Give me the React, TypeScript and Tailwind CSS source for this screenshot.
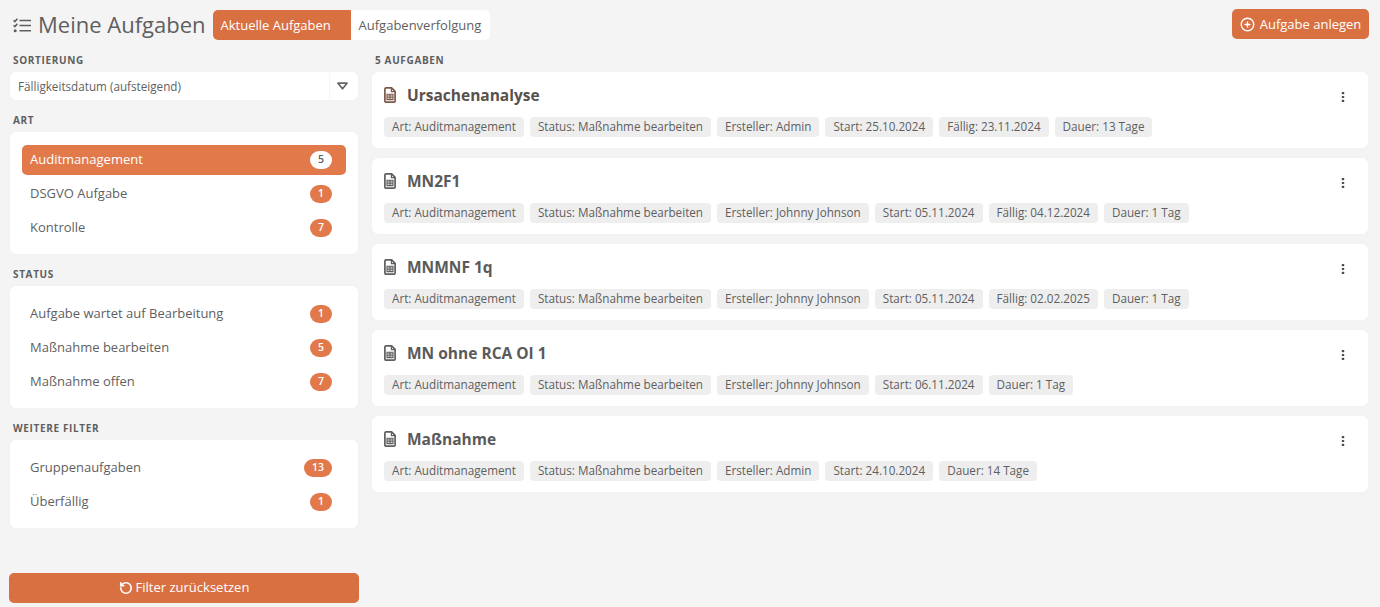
import { CirclePlus, RotateCcw } from "lucide-react";

const ACCENT = "bg-[#d97042]";

type Task = { title: string; tags: string[]; accent?: boolean };

const tasks: Task[] = [
  {
    title: "Ursachenanalyse",
    accent: true,
    tags: ["Art: Auditmanagement", "Status: Maßnahme bearbeiten", "Ersteller: Admin", "Start: 25.10.2024", "Fällig: 23.11.2024", "Dauer: 13 Tage"],
  },
  {
    title: "MN2F1",
    tags: ["Art: Auditmanagement", "Status: Maßnahme bearbeiten", "Ersteller: Johnny Johnson", "Start: 05.11.2024", "Fällig: 04.12.2024", "Dauer: 1 Tag"],
  },
  {
    title: "MNMNF 1q",
    tags: ["Art: Auditmanagement", "Status: Maßnahme bearbeiten", "Ersteller: Johnny Johnson", "Start: 05.11.2024", "Fällig: 02.02.2025", "Dauer: 1 Tag"],
  },
  {
    title: "MN ohne RCA OI 1",
    tags: ["Art: Auditmanagement", "Status: Maßnahme bearbeiten", "Ersteller: Johnny Johnson", "Start: 06.11.2024", "Dauer: 1 Tag"],
  },
  {
    title: "Maßnahme",
    tags: ["Art: Auditmanagement", "Status: Maßnahme bearbeiten", "Ersteller: Admin", "Start: 24.10.2024", "Dauer: 14 Tage"],
  },
];

const filterGroups = [
  {
    label: "Art",
    items: [
      { name: "Auditmanagement", count: 5, active: true },
      { name: "DSGVO Aufgabe", count: 1 },
      { name: "Kontrolle", count: 7 },
    ],
  },
  {
    label: "Status",
    items: [
      { name: "Aufgabe wartet auf Bearbeitung", count: 1 },
      { name: "Maßnahme bearbeiten", count: 5 },
      { name: "Maßnahme offen", count: 7 },
    ],
  },
  {
    label: "Weitere Filter",
    items: [
      { name: "Gruppenaufgaben", count: 13 },
      { name: "Überfällig", count: 1 },
    ],
  },
];

function TasksIcon() {
  return (
    <svg width="18" height="15" viewBox="0 0 18 15" fill="none" stroke="#5f5f5f" strokeWidth="1.6">
      <path d="M0.6 2.2 L1.9 3.5 L4.4 0.7" />
      <path d="M0.6 7.2 L1.9 8.5 L4.4 5.7" />
      <circle cx="2.2" cy="12.8" r="1.5" fill="#5f5f5f" stroke="none" />
      <path d="M6.5 2.5 H18 M6.5 7.5 H18 M6.5 12.8 H18" />
    </svg>
  );
}

function FileIcon({ color }: { color: string }) {
  return (
    <svg width="12" height="16" viewBox="0 0 12 16" fill="none" stroke={color} className="-mt-0.5 shrink-0">
      <path d="M1.8 0.9 H7.6 L11.1 4.4 V14 a1.1 1.1 0 0 1 -1.1 1.1 H2 A1.1 1.1 0 0 1 0.9 14 V2 A1.1 1.1 0 0 1 1.8 0.9 Z" strokeWidth="1.7" />
      <path d="M7.4 1 V4.6 H11" strokeWidth="1.2" />
      <path d="M3 7.2 H9 V12.6 H3 Z M3 9 H9 M3 10.8 H9 M6 7.2 V12.6" strokeWidth="1.1" />
    </svg>
  );
}

function DotsIcon() {
  return (
    <svg width="4" height="12" viewBox="0 0 4 12" fill="#4a4a4a" className="mt-0.5">
      <rect x="0.7" y="1" width="2.6" height="2.2" rx="0.8" />
      <rect x="0.7" y="4.9" width="2.6" height="2.2" rx="0.8" />
      <rect x="0.7" y="8.8" width="2.6" height="2.2" rx="0.8" />
    </svg>
  );
}

function SectionLabel({ children }: { children: string }) {
  return (
    <div className="text-[10px] leading-[14px] font-bold uppercase tracking-[0.065em] text-[#5f5f5f]">
      {children}
    </div>
  );
}

function FilterRow({ name, count, active }: { name: string; count: number; active?: boolean }) {
  return (
    <div
      className={`flex h-[30px] items-center justify-between rounded-[5px] pl-2 pr-3.5 text-[13px] ${
        active ? "bg-[#e2794b] text-white" : "text-[#5f5f5f]"
      }`}
    >
      <span>{name}</span>
      <span
        className={`flex h-[18px] min-w-[22px] items-center justify-center rounded-full px-2 text-[10.5px] font-semibold ${
          active ? "bg-white text-[#5f5f5f]" : "bg-[#e2794b] text-white"
        }`}
      >
        {count}
      </span>
    </div>
  );
}

function TaskCard({ task }: { task: Task }) {
  return (
    <div className="h-[76px] rounded-[5px] border border-white bg-white pl-[11px] pr-[22px] pt-3 shadow-[0_0_1px_rgba(0,0,0,0.08)]">
      <div className="flex h-[22px] items-center justify-between">
        <div className="flex items-center gap-[11px]">
          <FileIcon color={task.accent ? "#7a5a4c" : "#5f5f5f"} />
          <span className={`text-[15.5px] font-bold ${task.accent ? "text-[#59514d]" : "text-[#5a5a5a]"}`}>
            {task.title}
          </span>
        </div>
        <DotsIcon />
      </div>
      <div className="mt-2.5 flex gap-1.5">
        {task.tags.map((tag) => (
          <span key={tag} className="flex h-5 items-center rounded-[4px] bg-[#eeeeee] px-2 text-[11.7px] text-[#5f5f5f]">
            {tag}
          </span>
        ))}
      </div>
    </div>
  );
}

export default function App() {
  return (
    <div className="flex h-[607px] flex-col overflow-hidden bg-[#f4f4f4] font-['Open_Sans',sans-serif]">
      <div className="flex h-10 shrink-0 items-end justify-between pl-[13px] pr-[11px]">
        <div className="flex items-center">
          <TasksIcon />
          <h1 className="ml-[7px] pb-0.5 text-[22px] leading-7 text-[#5f5f5f]">Meine Aufgaben</h1>
          <div className="ml-[7px] flex h-[30px] overflow-hidden rounded-[5px] bg-white text-[13px]">
            <div className={`flex w-[138px] items-center pl-2 pt-0.5 text-white ${ACCENT}`}>Aktuelle Aufgaben</div>
            <div className="flex w-[139px] items-center pl-2 pt-0.5 text-[#5f5f5f]">Aufgabenverfolgung</div>
          </div>
        </div>
        <button type="button" className={`mb-px flex h-[30px] w-[137px] items-center justify-center gap-[5px] rounded-[5px] pt-0.5 text-[13px] text-white ${ACCENT}`}>
          <CirclePlus size={15} strokeWidth={2.2} className="-mt-0.5" />
          Aufgabe anlegen
        </button>
      </div>

      <div className="flex min-h-0 flex-1 gap-3.5 pl-[10px] pr-3">
        <aside className="flex w-[348px] shrink-0 flex-col pb-1">
          <div className="pl-[3px] pt-[13px]">
            <SectionLabel>Sortierung</SectionLabel>
          </div>
          <div className="mt-[5px] flex h-[28px] items-center justify-between rounded-[5px] border border-white bg-white text-[11.7px] text-[#5f5f5f] shadow-[0_0_1px_rgba(0,0,0,0.08)]">
            <span className="pl-[7px] pt-0.5">Fälligkeitsdatum (aufsteigend)</span>
            <span className="flex h-full w-7 items-center justify-center border-l border-[#f6f6f6] pr-0.5">
              <svg width="11" height="8" viewBox="0 0 11 8" fill="none" stroke="#666666" strokeWidth="1.7" strokeLinejoin="round">
                <path d="M1 1.2 H10 L5.5 6.8 Z" />
              </svg>
            </span>
          </div>
          {filterGroups.map((group) => (
            <div key={group.label} className="mt-[13px]">
              <div className="pl-[3px]">
                <SectionLabel>{group.label}</SectionLabel>
              </div>
              <div className="mt-[5px] flex flex-col gap-1 rounded-[5px] border border-white bg-white px-[11px] pt-3 pb-2.5 shadow-[0_0_1px_rgba(0,0,0,0.08)]">
                {group.items.map((item) => (
                  <FilterRow key={item.name} {...item} />
                ))}
              </div>
            </div>
          ))}
          <button type="button" className={`-mx-px mt-auto flex h-[30px] items-center justify-center gap-[3px] rounded-[5px] text-[13px] text-white ${ACCENT}`}>
            <RotateCcw size={14} strokeWidth={2.8} />
            Filter zurücksetzen
          </button>
        </aside>

        <main className="min-w-0 flex-1">
          <div className="pl-[3px] pt-[13px]">
            <SectionLabel>5 Aufgaben</SectionLabel>
          </div>
          <div className="mt-[5px] flex flex-col gap-2.5">
            {tasks.map((task) => (
              <TaskCard key={task.title} task={task} />
            ))}
          </div>
        </main>
      </div>
    </div>
  );
}
